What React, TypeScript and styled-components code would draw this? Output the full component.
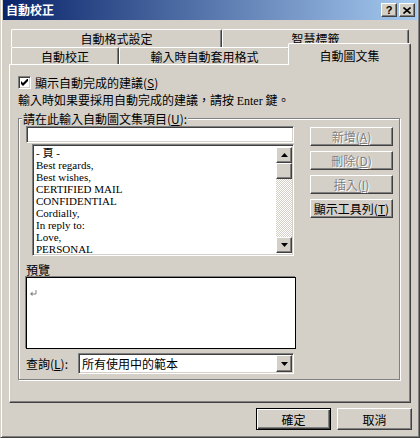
import React from "react";
import styled, { createGlobalStyle, css } from "styled-components";

const FACE = "#D4D0C8";
const SHADOW = "#808080";
const DARK = "#404040";

const GlobalStyle = createGlobalStyle`
  html, body {
    margin: 0;
    padding: 0;
    background: ${FACE};
  }
  * {
    box-sizing: border-box;
  }
  body {
    font-family: "Noto Sans CJK TC", "Noto Sans CJK SC", sans-serif;
    font-size: 12px;
    color: #000;
  }
`;

const raised = css`
  background: ${FACE};
  border-top: 1px solid #fff;
  border-left: 1px solid #fff;
  border-right: 1px solid ${DARK};
  border-bottom: 1px solid ${DARK};
  box-shadow: inset -1px -1px 0 ${SHADOW};
`;

const sunken = css`
  background: #fff;
  border-top: 1px solid ${SHADOW};
  border-left: 1px solid ${SHADOW};
  border-right: 1px solid #fff;
  border-bottom: 1px solid #fff;
  box-shadow: inset 1px 1px 0 ${DARK}, inset -1px -1px 0 ${FACE};
`;

const Window = styled.div`
  width: 420px;
  height: 438px;
  background: ${FACE};
  border-left: 1px solid ${FACE};
  border-right: 1px solid ${DARK};
  border-bottom: 1px solid ${DARK};
  box-shadow: inset 1px 0 0 #fff, inset -1px -1px 0 ${SHADOW};
  padding: 0 2px 2px 2px;
  display: flex;
  flex-direction: column;
`;

const TitleBar = styled.div`
  height: 20px;
  background: linear-gradient(to right, #0a246a, #a6caf0);
  display: flex;
  align-items: center;
  padding: 0 2px 0 3px;
`;

const Title = styled.div`
  flex: 1;
  color: #fff;
  font-weight: bold;
  font-size: 12px;
  line-height: 14px;
`;

const CaptionButton = styled.div`
  ${raised};
  width: 16px;
  height: 14px;
  display: flex;
  align-items: center;
  justify-content: center;
  font-family: "Liberation Sans", sans-serif;
  font-weight: bold;
  font-size: 11px;
  line-height: 12px;
  & + & {
    margin-left: 2px;
  }
`;

const Body = styled.div`
  padding: 0 6px;
  display: flex;
  flex-direction: column;
`;

const TabArea = styled.div`
  margin-top: 9px;
  display: flex;
  flex-direction: column;
`;

const TabRow = styled.div<{ $h: number }>`
  display: flex;
  align-items: flex-start;
  height: ${(p) => p.$h}px;
  padding-left: 2px;
`;

const Tab = styled.div<{ $w: number; $h: number; $selected?: boolean }>`
  width: ${(p) => p.$w}px;
  height: ${(p) => p.$h}px;
  flex-shrink: 0;
  background: ${FACE};
  border-top: 1px solid #fff;
  border-left: 1px solid #fff;
  border-right: 1px solid ${DARK};
  border-radius: 2px 2px 0 0;
  box-shadow: inset -1px 0 0 ${SHADOW};
  display: flex;
  align-items: center;
  justify-content: center;
  line-height: 13px;
  ${(p) =>
    p.$selected &&
    css`
      position: relative;
      z-index: 1;
      margin: -4px -2px 0 -2px;
      padding-top: 2px;
    `}
`;

const Panel = styled.div`
  height: 339px;
  border-top: 1px solid #fff;
  border-left: 1px solid #fff;
  border-right: 1px solid ${DARK};
  border-bottom: 1px solid ${DARK};
  box-shadow: inset -1px -1px 0 ${SHADOW};
  padding: 11px 8px 0 8px;
  display: flex;
  flex-direction: column;
`;

const CheckRow = styled.div`
  display: flex;
  align-items: center;
  height: 13px;
  line-height: 13px;
  gap: 4px;
`;

const CheckBox = styled.div`
  ${sunken};
  width: 13px;
  height: 13px;
  display: flex;
  align-items: center;
  justify-content: center;
`;

const TextLine = styled.div`
  margin-top: 4px;
  height: 13px;
  line-height: 13px;
  white-space: nowrap;
`;

const Latin = styled.span`
  font-family: "Liberation Serif", serif;
  font-size: 12px;
`;

const Key = styled.span`
  text-decoration: underline;
`;

const GroupBox = styled.div`
  position: relative;
  margin-top: 12px;
  width: 382px;
  height: 262px;
  border: 1px solid ${SHADOW};
  box-shadow: inset 1px 1px 0 #fff, 1px 1px 0 #fff;
  padding: 7px 6px 5px 7px;
  display: flex;
`;

const Legend = styled.div`
  position: absolute;
  top: -7px;
  left: 3px;
  padding: 0 1px;
  background: ${FACE};
  line-height: 13px;
  white-space: nowrap;
`;

const LeftCol = styled.div`
  width: 270px;
  display: flex;
  flex-direction: column;
`;

const RightCol = styled.div`
  margin-left: 14px;
  padding-top: 1px;
  display: flex;
  flex-direction: column;
  gap: 5px;
`;

const TextInput = styled.div`
  ${sunken};
  width: 268px;
  height: 17px;
`;

const ListBox = styled.div`
  ${sunken};
  margin: 1px 0 0 6px;
  width: 262px;
  height: 112px;
  padding: 2px 1px 2px 2px;
  display: flex;
`;

const ListItems = styled.div`
  flex: 1;
  padding-left: 1px;
  font-family: "Liberation Serif", "Noto Sans CJK TC", serif;
  font-size: 11px;
`;

const ListItem = styled.div`
  height: 12px;
  line-height: 12px;
  white-space: nowrap;
`;

const ScrollBar = styled.div`
  width: 16px;
  display: flex;
  flex-direction: column;
`;

const ScrollButton = styled.div`
  ${raised};
  width: 16px;
  height: 16px;
  display: flex;
  align-items: center;
  justify-content: center;
  flex-shrink: 0;
`;

const Track = styled.div`
  flex: 1;
  background-image: conic-gradient(#fff 25%, ${FACE} 0 50%, #fff 0 75%, ${FACE} 0);
  background-size: 2px 2px;
`;

const Label = styled.div<{ $w?: number }>`
  line-height: 13px;
  height: 13px;
  white-space: nowrap;
  ${(p) => p.$w && `width: ${p.$w}px; flex-shrink: 0;`}
`;

const SectionLabel = styled(Label)`
  margin-top: 7px;
`;

const PreviewBox = styled.div`
  margin-top: 1px;
  width: 270px;
  height: 72px;
  background: #fff;
  border: 1px solid #000;
  box-shadow: -1px -1px 0 ${SHADOW};
  padding: 4px 0 0 3px;
`;

const QueryRow = styled.div`
  margin-top: 4px;
  height: 21px;
  display: flex;
  align-items: center;
`;

const Select = styled.div`
  ${sunken};
  width: 216px;
  height: 21px;
  display: flex;
  align-items: center;
  padding: 0 1px 0 3px;
  line-height: 13px;
`;

const SelectText = styled.div`
  flex: 1;
`;

const DropButton = styled(ScrollButton)`
  height: 17px;
`;

const SideButton = styled.div<{ $disabled?: boolean }>`
  ${raised};
  width: 83px;
  height: 19px;
  display: flex;
  align-items: center;
  justify-content: center;
  line-height: 13px;
  white-space: nowrap;
  ${(p) =>
    p.$disabled &&
    css`
      color: ${SHADOW};
      text-shadow: 1px 1px 0 #fff;
    `}
`;

const ButtonBar = styled.div`
  margin: 5px -1px 0 0;
  display: flex;
  justify-content: flex-end;
  gap: 6px;
`;

const DialogButton = styled.div<{ $default?: boolean }>`
  width: 75px;
  height: 22px;
  display: flex;
  align-items: center;
  justify-content: center;
  line-height: 13px;
  background: ${FACE};
  ${(p) =>
    p.$default
      ? css`
          border: 1px solid #000;
          box-shadow: inset 1px 1px 0 #fff, inset -1px -1px 0 ${DARK},
            inset -2px -2px 0 ${SHADOW};
        `
      : raised}
`;

const Arrow = ({ up }: { up?: boolean }) => (
  <svg width="7" height="4" viewBox="0 0 7 4">
    <polygon points={up ? "3.5,0 7,4 0,4" : "0,0 7,0 3.5,4"} fill="#000" />
  </svg>
);

const items = [
  "- 頁 -",
  "Best regards,",
  "Best wishes,",
  "CERTIFIED MAIL",
  "CONFIDENTIAL",
  "Cordially,",
  "In reply to:",
  "Love,",
  "PERSONAL",
];

const sideButtons = [
  { label: "新增", key: "A", disabled: true },
  { label: "刪除", key: "D", disabled: true },
  { label: "插入", key: "I", disabled: true },
  { label: "顯示工具列", key: "T", disabled: false },
];

export default function App() {
  return (
    <>
      <GlobalStyle />
      <Window>
        <TitleBar>
          <Title>自動校正</Title>
          <CaptionButton>?</CaptionButton>
          <CaptionButton>
            <svg width="8" height="7" viewBox="0 0 8 7">
              <path d="M0.5 0.5 L7.5 6.5 M7.5 0.5 L0.5 6.5" stroke="#000" strokeWidth="1.6" />
            </svg>
          </CaptionButton>
        </TitleBar>

        <Body>
          <TabArea>
            <TabRow $h={18}>
              <Tab $w={211} $h={18}>自動格式設定</Tab>
              <Tab $w={187} $h={18}>智慧標籤</Tab>
            </TabRow>
            <TabRow $h={17}>
              <Tab $w={108} $h={17}>自動校正</Tab>
              <Tab $w={171} $h={17}>輸入時自動套用格式</Tab>
              <Tab $w={123} $h={22} $selected>
                自動圖文集
              </Tab>
            </TabRow>
          </TabArea>

          <Panel>
            <CheckRow>
              <CheckBox>
                <svg width="7" height="7" viewBox="0 0 7 7">
                  <polygon points="0,2 2,4 7,-1 7,2 2,7 0,5" fill="#000" />
                </svg>
              </CheckBox>
              <span>
                顯示自動完成的建議(<Key>S</Key>)
              </span>
            </CheckRow>
            <TextLine>
              輸入時如果要採用自動完成的建議，請按 <Latin>Enter</Latin> 鍵。
            </TextLine>

            <GroupBox>
              <Legend>
                請在此輸入自動圖文集項目(<Key>U</Key>):
              </Legend>
              <LeftCol>
                <TextInput />
                <ListBox>
                  <ListItems>
                    {items.map((it) => (
                      <ListItem key={it}>{it}</ListItem>
                    ))}
                  </ListItems>
                  <ScrollBar>
                    <ScrollButton>
                      <Arrow up />
                    </ScrollButton>
                    <ScrollButton />
                    <Track />
                    <ScrollButton>
                      <Arrow />
                    </ScrollButton>
                  </ScrollBar>
                </ListBox>
                <SectionLabel>預覽</SectionLabel>
                <PreviewBox>
                  <svg width="7" height="6" viewBox="0 0 7 6">
                    <path d="M6 0 V4 H1.5" stroke="#808080" strokeWidth="1" fill="none" />
                    <polygon points="0,4 2.5,1.5 2.5,6" fill="#808080" />
                  </svg>
                </PreviewBox>
                <QueryRow>
                  <Label $w={52}>
                    查詢(<Key>L</Key>):
                  </Label>
                  <Select>
                    <SelectText>所有使用中的範本</SelectText>
                    <DropButton>
                      <Arrow />
                    </DropButton>
                  </Select>
                </QueryRow>
              </LeftCol>
              <RightCol>
                {sideButtons.map((b) => (
                  <SideButton key={b.label} $disabled={b.disabled}>
                    {b.label}(<Key>{b.key}</Key>)
                  </SideButton>
                ))}
              </RightCol>
            </GroupBox>
          </Panel>

          <ButtonBar>
            <DialogButton $default>確定</DialogButton>
            <DialogButton>取消</DialogButton>
          </ButtonBar>
        </Body>
      </Window>
    </>
  );
}
